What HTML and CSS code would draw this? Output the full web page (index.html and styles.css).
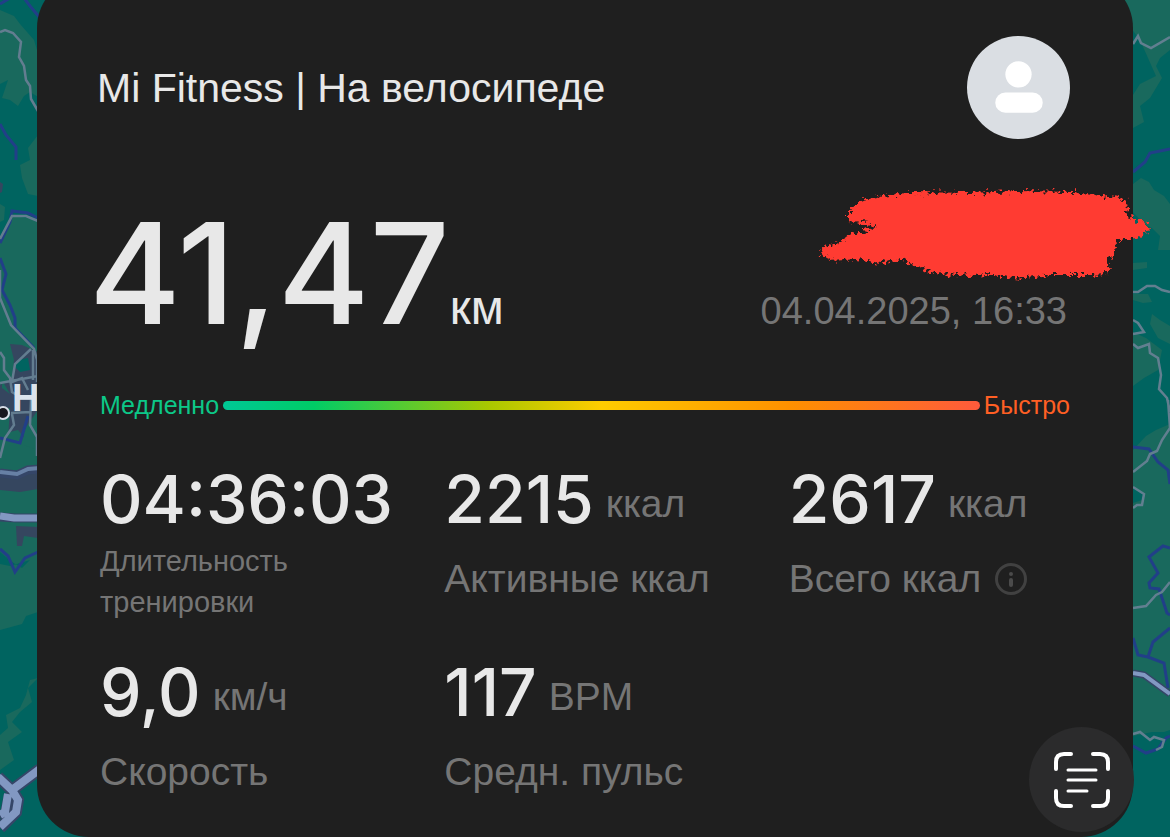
FILE: index.html
```html
<!DOCTYPE html>
<html lang="ru">
<head>
    <meta charset="UTF-8">
    <meta name="viewport" content="width=device-width, initial-scale=1">
    <title>Mi Fitness | На велосипеде</title>
    <link rel="stylesheet" href="styles.css">
</head>
<body>
    <svg class="map" viewBox="0 0 1170 837" preserveAspectRatio="none" aria-hidden="true">
        <rect width="1170" height="837" fill="#006460"/>
        <!-- left side: forest and town -->
        <g fill="#19695d">
            <path d="M0 10 14 16 20 24 34 40 40 60V98L30 92 24 96 18 106 10 100 2 98 8 80 0 84Z"/>
            <path d="M38 135 28 148 30 160 20 165 22 178 28 194 38 196ZM0 204 5 207 4 220 0 222Z"/>
            <path d="M12 216 38 219V612L26 616 22 624 0 630V570 240Z"/>
            <path d="M38 678 28 688 32 702 20 712 12 722 22 732 8 742 14 760 0 770V735L8 728 6 715 20 708 26 695 30 680Z"/>
        </g>
        <path fill="#006460" d="M0 552 12 562 22 568 30 560 10 566 0 564Z"/>
        <g fill="#35465f">
            <path d="M10 344 22 345 38 352V437L26 440 18 430 10 432 0 436V385L12 378 14 360Z"/>
            <path d="M0 474 38 468V489L20 492 0 490ZM16 526 38 527V538L24 536 22 546 17 546Z"/>
            <path d="M0 182 3 184 2 192 0 193Z"/>
        </g>
        <path fill="#006460" d="M18 360 28 358 30 370 20 372 14 366Z"/>
        <path fill="#19695d" d="M2 380 10 394 2 388ZM0 410 10 408 8 440 0 436ZM24 430 38 410V450L24 445Z"/>
        <g fill="none" stroke="#213f88" stroke-width="3">
            <path d="M0 4 10 -2M24 -2 30 6 40 18M0 124 6 135 16 147V160M38 218 28 213 12 211 10 222 0 243M0 258 6 274 2 290 10 305 15 318V328L34 348M0 438 20 443 28 416M0 549 8 556 15 572 25 558 38 552"/>
        </g>
        <g fill="none" stroke="#637d90" stroke-width="2.5">
            <path d="M0 32 5 30 13 33 21 42 19 57 24 66 26 80 30 86 31 99 38 111M0 239 12 216 26 216 38 221M0 270V298L11 325 34 349 37 360M0 352 4 358 4 370 10 378 12 392 20 397M31 349 15 364 12 382 22 378 28 390M33 350V380M37 356V382M0 383 38 376M11 413 30 412M12 414 14 425 5 438 0 458M31 400 30 425 37 437V456"/>
        </g>
        <g fill="none">
            <path stroke="#354668" stroke-width="9" d="M0 473 17 475 28 470 40 469M0 517 16 518 40 518"/>
            <path stroke="#6780a5" stroke-width="4" d="M0 472 17 474 28 469 40 468"/>
            <path stroke="#8298c2" stroke-width="7" d="M0 516 14 518 40 518"/>
            <path stroke="#354668" stroke-width="12" d="M40 769 12 790M-2 777 12 790 18 800 16 812 0 828M10 794 6 813 0 818"/>
            <path stroke="#8298c2" stroke-width="8" d="M40 769 12 790M-2 777 12 790 18 800 16 812 0 827M8 794 5 812 0 815"/>
        </g>
        <circle cx="3" cy="413" r="6" fill="#17171d" stroke="#d6dde6" stroke-width="2"/>
        <text class="map-label" x="12" y="411">Н</text>

        <!-- right side: hills and country roads -->
        <g fill="#19695d">
            <path d="M1110 0H1170V50L1160 58 1156 66 1162 78 1150 98 1140 106 1144 122 1133 128V95L1140 84 1156 76 1140 40Z"/>
            <path d="M1133 184 1141 178 1149 182 1154 190 1164 196 1170 204V250L1158 250 1160 236 1152 228 1144 224 1133 212Z"/>
            <path d="M1133 263 1147 262V268L1133 270ZM1133 294 1148 294 1152 302 1143 303 1133 300ZM1152 314 1160 320 1170 326V344L1158 338 1150 324Z"/>
            <path d="M1133 332 1146 338 1162 350 1158 370 1144 378 1133 386ZM1146 436 1156 430 1170 424V732L1152 732 1133 736V450Z"/>
        </g>
        <path fill="#006460" d="M1133 487 1143 494 1142 500 1133 503ZM1137 750 1146 740 1158 734 1170 730V800H1137Z"/>
        <g fill="none" stroke="#213f88" stroke-width="3">
            <path d="M1133 172 1145 162 1150 153 1170 149M1133 447 1149 449 1158 462 1168 470 1170 484M1170 548 1163 546 1149 557 1158 573 1149 583 1150 588 1159 589 1167 613 1170 615M1133 638 1138 655 1148 657 1164 663 1168 688M1148 657 1153 642 1170 628M1133 746 1146 753 1158 749 1166 738 1170 736"/>
        </g>
        <g fill="none" stroke="#627f90" stroke-width="2.5">
            <path d="M1133 44 1138 36 1141 43 1151 48 1170 37M1133 292H1138L1147 286H1155L1162 290 1170 292M1133 320 1138 323 1144 332 1133 334M1133 344 1138 348 1149 344 1150 353 1158 358 1161 375 1159 389 1167 398 1170 412M1168 400 1170 428 1162 440 1157 451 1150 454 1147 461 1133 472M1133 487 1144 494 1142 505 1137 505 1133 508M1170 582 1162 592 1156 595 1146 606 1133 608M1133 734 1140 732 1150 740 1154 737 1164 740 1162 747 1156 750"/>
        </g>
        <path fill="none" stroke="#354668" stroke-width="7" d="M1133 673 1144 675 1170 694"/>
        <path fill="none" stroke="#8298c2" stroke-width="4" d="M1133 673 1144 675 1170 694"/>
    </svg>

    <main class="card">
        <header class="card-header">
            <h1>Mi Fitness | На велосипеде</h1>
            <svg class="avatar" viewBox="0 0 102 102" role="img" aria-label="Профиль">
                <circle cx="51" cy="51" r="51" fill="#dadee3"/>
                <circle cx="51" cy="38" r="13" fill="#fff"/>
                <rect x="28" y="56" width="47" height="20" rx="10" fill="#fff"/>
            </svg>
        </header>

        <section class="summary">
            <p class="distance">41,47<span class="distance-unit">км</span></p>
            <time class="date" datetime="2025-04-04T16:33">04.04.2025, 16:33</time>
            <svg class="scribble" viewBox="0 0 340 100" aria-hidden="true">
                <filter id="rough" x="-5%" y="-10%" width="110%" height="120%">
                    <feTurbulence type="fractalNoise" baseFrequency="0.25" numOctaves="3" seed="4" result="noise"/>
                    <feDisplacementMap in="SourceGraphic" in2="noise" scale="13" xChannelSelector="R" yChannelSelector="G"/>
                </filter>
                <path filter="url(#rough)" fill="#ff3b30" d="M38 27 48 18 72 13 100 9 160 10 205 8 265 9 300 14 314 16 318 34 326 39 335 38 338 46 332 54 318 56 306 57 304 70 298 76 296 91 280 92 240 92 215 95 180 92 158 93 130 91 105 84 92 76 70 80 45 76 20 78 9 70 13 64 28 60 38 52 66 44 62 42 38 38Z"/>
            </svg>
        </section>

        <div class="pace">
            <span class="pace-slow">Медленно</span>
            <span class="pace-bar"></span>
            <span class="pace-fast">Быстро</span>
        </div>

        <dl class="stats">
            <div class="stat">
                <dd>04:36:03</dd>
                <dt class="label-small">Длительность<br>тренировки</dt>
            </div>
            <div class="stat">
                <dd>2215<span class="unit">ккал</span></dd>
                <dt>Активные ккал</dt>
            </div>
            <div class="stat">
                <dd>2617<span class="unit">ккал</span></dd>
                <dt>Всего ккал
                    <svg class="info" viewBox="0 0 32 32" aria-hidden="true">
                        <circle cx="16" cy="16" r="14.5" fill="none" stroke="#414141" stroke-width="3"/>
                        <circle cx="16" cy="11" r="2" fill="#4b4b4b"/>
                        <path d="M16 17V22" stroke="#4b4b4b" stroke-width="4" stroke-linecap="round"/>
                    </svg>
                </dt>
            </div>
            <div class="stat">
                <dd>9,0<span class="unit">км/ч</span></dd>
                <dt>Скорость</dt>
            </div>
            <div class="stat">
                <dd>117<span class="unit">BPM</span></dd>
                <dt>Средн. пульс</dt>
            </div>
        </dl>

        <button class="scan-button" type="button" aria-label="Распознать текст">
            <svg viewBox="0 0 56 56" fill="none" stroke="#fff" stroke-width="4" stroke-linecap="round">
                <path d="M2 17V10Q2 2 10 2H17M39 2H46Q54 2 54 10V17M54 39V46Q54 54 46 54H39M17 54H10Q2 54 2 46V39"/>
                <path stroke-width="3" d="M14 18H42M14 28H42M14 39H33"/>
            </svg>
        </button>
    </main>
</body>
</html>
```

FILE: styles.css
```css
:root {
    --card-bg: #1f1f1f;
    --text: #e8e8e8;
    --muted: #757575;
    --slow: #0cc888;
    --fast: #ff5f24;
}

* {
    box-sizing: border-box;
}

body {
    margin: 0;
    padding: 0 37px;
    min-height: 100vh;
    position: relative;
    overflow: hidden;
    background: #006460;
    color: var(--text);
    font-family: "Liberation Sans", Arial, sans-serif;
}

h1, p, dl, dd, dt {
    margin: 0;
    font-weight: 400;
}

.map {
    position: absolute;
    top: 0;
    left: 0;
    width: 100%;
    height: 100%;
}

.map-label {
    fill: #dbe3ec;
    font-size: 38px;
    font-weight: 700;
}

/* the card starts above the top edge of the window */
.card {
    position: relative;
    margin-top: -24px;
    padding: 60px 0 33px;
    border-radius: 52px;
    background: var(--card-bg);
}

.card-header {
    display: flex;
    align-items: center;
    justify-content: space-between;
    padding: 0 63px 0 60px;
}

h1 {
    font-size: 41px;
    line-height: 48px;
}

.avatar {
    width: 103px;
    height: 103px;
}

.summary {
    position: relative;
    display: flex;
    align-items: baseline;
    justify-content: space-between;
    padding: 82px 66px 0 52px;
}

.distance {
    font-family: Inter, sans-serif;
    font-size: 140px;
    font-weight: 500;
    line-height: 104px;
}

.distance-unit {
    font-family: "Liberation Sans", Arial, sans-serif;
    font-size: 48px;
    line-height: 48px;
}

.date {
    color: var(--muted);
    font-size: 38px;
}

.scribble {
    position: absolute;
    top: 44px;
    right: -18px;
    width: 340px;
    height: 100px;
}

.pace {
    display: flex;
    align-items: center;
    gap: 4px;
    margin-top: 56px;
    padding: 0 63px;
    font-size: 25px;
    line-height: 32px;
}

.pace-slow {
    color: var(--slow);
}

.pace-fast {
    color: var(--fast);
}

.pace-bar {
    flex: 1;
    height: 9px;
    border-radius: 5px;
    background: linear-gradient(90deg, #00c896, #0c6 12%, #a8c800 35%, #fc0 50%, #ff9000 75%, #ff5a3c);
}

.stats {
    display: grid;
    grid-template-columns: repeat(3, 1fr);
    row-gap: 27px;
    margin-top: 36px;
    padding-left: 63px;
}

.stat {
    min-height: 154px;
}

dd {
    font-family: Inter, sans-serif;
    font-size: 66px;
    font-weight: 500;
    line-height: 84px;
    white-space: nowrap;
}

.unit {
    margin-left: 12px;
    color: var(--muted);
    font-family: "Liberation Sans", Arial, sans-serif;
    font-size: 39px;
    font-weight: 400;
    line-height: 39px;
    vertical-align: 6px;
}

dt {
    display: flex;
    align-items: center;
    gap: 14px;
    margin-top: 16px;
    color: var(--muted);
    font-size: 39px;
    line-height: 44px;
}

.label-small {
    display: block;
    margin-top: 0;
    font-size: 29px;
    line-height: 41px;
}

.info {
    width: 32px;
    height: 32px;
}

.scan-button {
    position: absolute;
    right: -1px;
    bottom: 5px;
    display: flex;
    align-items: center;
    justify-content: center;
    width: 105px;
    height: 105px;
    padding: 0;
    border: 0;
    border-radius: 50%;
    background: #2b2b2c;
}

.scan-button svg {
    width: 56px;
    height: 56px;
}
```
